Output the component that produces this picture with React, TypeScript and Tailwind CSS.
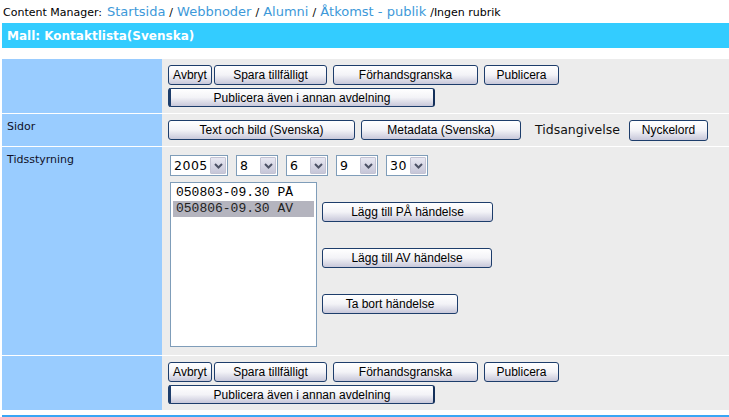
import React from "react";

const VERDANA = { fontFamily: '"DejaVu Sans", Verdana, sans-serif' };
const ARIAL = { fontFamily: '"Liberation Sans", Arial, sans-serif' };
const MONO = { fontFamily: '"Liberation Mono", "Courier New", monospace' };

type BtnProps = {
  label: string;
  className?: string;
};

function Btn({ label, className = "" }: BtnProps) {
  return (
    <button
      type="button"
      style={ARIAL}
      className={`flex items-center justify-center shrink-0 rounded-[3px] border border-[#1d3d6b] bg-gradient-to-b from-white via-[#f3f3f7] to-[#c8c8da] text-[12px] leading-none text-black ${className}`}
    >
      {label}
    </button>
  );
}

function ActionButtons() {
  return (
    <div className="flex flex-col pl-[6px] pt-[6px]">
      <div className="flex h-[20px]">
        <Btn label="Avbryt" className="w-[44px] h-[20px]" />
        <Btn label="Spara tillfälligt" className="ml-[2px] w-[113px] h-[20px]" />
        <Btn label="Förhandsgranska" className="ml-[6px] w-[145px] h-[20px]" />
        <Btn label="Publicera" className="ml-[6px] w-[75px] h-[20px]" />
      </div>
      <Btn
        label="Publicera även i annan avdelning"
        className="mt-[3px] w-[267px] h-[19px] border-l-[3px] border-r-[2px] border-l-[#1d3d6b] border-r-[#14305a]"
      />
    </div>
  );
}

function Select({ value, w }: { value: string; w: string }) {
  return (
    <div className={`flex h-[21px] shrink-0 border border-[#7f9db9] bg-white ${w}`}>
      <span style={VERDANA} className="flex-1 pl-[3px] text-[12.5px] leading-[19px] tracking-[0.5px] text-black">
        {value}
      </span>
      <span className="m-[1px] flex w-[16px] items-center justify-center rounded-[1px] border border-[#c3c3d3] bg-gradient-to-b from-[#e8e8f2] to-[#c6c6d8]">
        <svg width="9" height="6" viewBox="0 0 9 6">
          <path d="M1 1 L4.5 4.5 L8 1" fill="none" stroke="#4d5266" strokeWidth="2" />
        </svg>
      </span>
    </div>
  );
}

function Row({ label, h, children }: { label?: string; h: string; children: React.ReactNode }) {
  return (
    <div className={`flex ${h}`}>
      <div style={VERDANA} className="w-[160px] shrink-0 bg-[#99ccff] pl-[5px] pt-[6px] text-[11px] leading-[13px] text-[#101028]">
        {label}
      </div>
      <div className="flex-1 bg-[#ececec]">{children}</div>
    </div>
  );
}

export default function App() {
  return (
    <div className="h-[417px] w-[729px] overflow-hidden bg-white">
      <div className="flex h-[23px] items-baseline pl-[3px] pt-[4px] leading-[16px]" style={VERDANA}>
        <span className="text-[11px] text-black">Content Manager:</span>
        <span className="ml-[5px] text-[13px] text-[#3d99d9]">Startsida</span>
        <span className="mx-[4px] text-[11px] text-black">/</span>
        <span className="text-[13px] text-[#3d99d9]">Webbnoder</span>
        <span className="mx-[4px] text-[11px] text-black">/</span>
        <span className="text-[13px] text-[#3d99d9]">Alumni</span>
        <span className="mx-[4px] text-[11px] text-black">/</span>
        <span className="text-[13px] text-[#3d99d9]">Åtkomst - publik</span>
        <span className="ml-[4px] text-[11px] text-black">/Ingen rubrik</span>
      </div>

      <div
        style={VERDANA}
        className="ml-[2px] flex h-[25px] items-center bg-[#33ccff] pl-[5px] text-[12px] font-bold text-white"
      >
        Mall: Kontaktlista(Svenska)
      </div>

      <div className="ml-[2px] mt-[11px] flex flex-col gap-[1px]">
        <Row h="h-[54px]">
          <ActionButtons />
        </Row>

        <Row label="Sidor" h="h-[32px]">
          <div className="flex h-full items-center pl-[6px]">
            <Btn label="Text och bild (Svenska)" className="w-[187px] h-[20px]" />
            <Btn label="Metadata (Svenska)" className="ml-[6px] w-[160px] h-[20px]" />
            <span style={VERDANA} className="ml-[14px] text-[12.5px] text-[#111]">
              Tidsangivelse
            </span>
            <Btn label="Nyckelord" className="ml-[9px] w-[79px] h-[21px]" />
          </div>
        </Row>

        <Row label="Tidsstyrning" h="h-[208px]">
          <div className="flex flex-col pl-[8px] pt-[8px]">
            <div className="flex gap-[8px]">
              <Select value="2005" w="w-[58px]" />
              <Select value="8" w="w-[42px]" />
              <Select value="6" w="w-[42px]" />
              <Select value="9" w="w-[42px]" />
              <Select value="30" w="w-[42px]" />
            </div>
            <div className="mt-[6px] flex">
              <div className="h-[165px] w-[147px] border border-[#7f9db9] bg-white p-[1px]">
                <div style={MONO} className="flex flex-col pt-[1px] text-[13px] leading-[16px] text-black">
                  <span className="pl-[4px]">050803-09.30 PÅ</span>
                  <span className="mx-[1px] bg-[#b4b4be] pl-[3px] text-[#222]">050806-09.30 AV</span>
                </div>
              </div>
              <div className="ml-[5px] flex flex-col pt-[20px]">
                <Btn label="Lägg till PÅ händelse" className="w-[171px] h-[20px] text-[12.5px]" />
                <Btn label="Lägg till AV händelse" className="mt-[26px] w-[170px] h-[20px] text-[12.5px]" />
                <Btn label="Ta bort händelse" className="mt-[26px] w-[136px] h-[20px] text-[12.5px]" />
              </div>
            </div>
          </div>
        </Row>

        <Row h="h-[54px]">
          <ActionButtons />
        </Row>
      </div>

      <div className="ml-[2px] mt-[5px] h-[2px] bg-[#3aa6f5]" />
    </div>
  );
}
